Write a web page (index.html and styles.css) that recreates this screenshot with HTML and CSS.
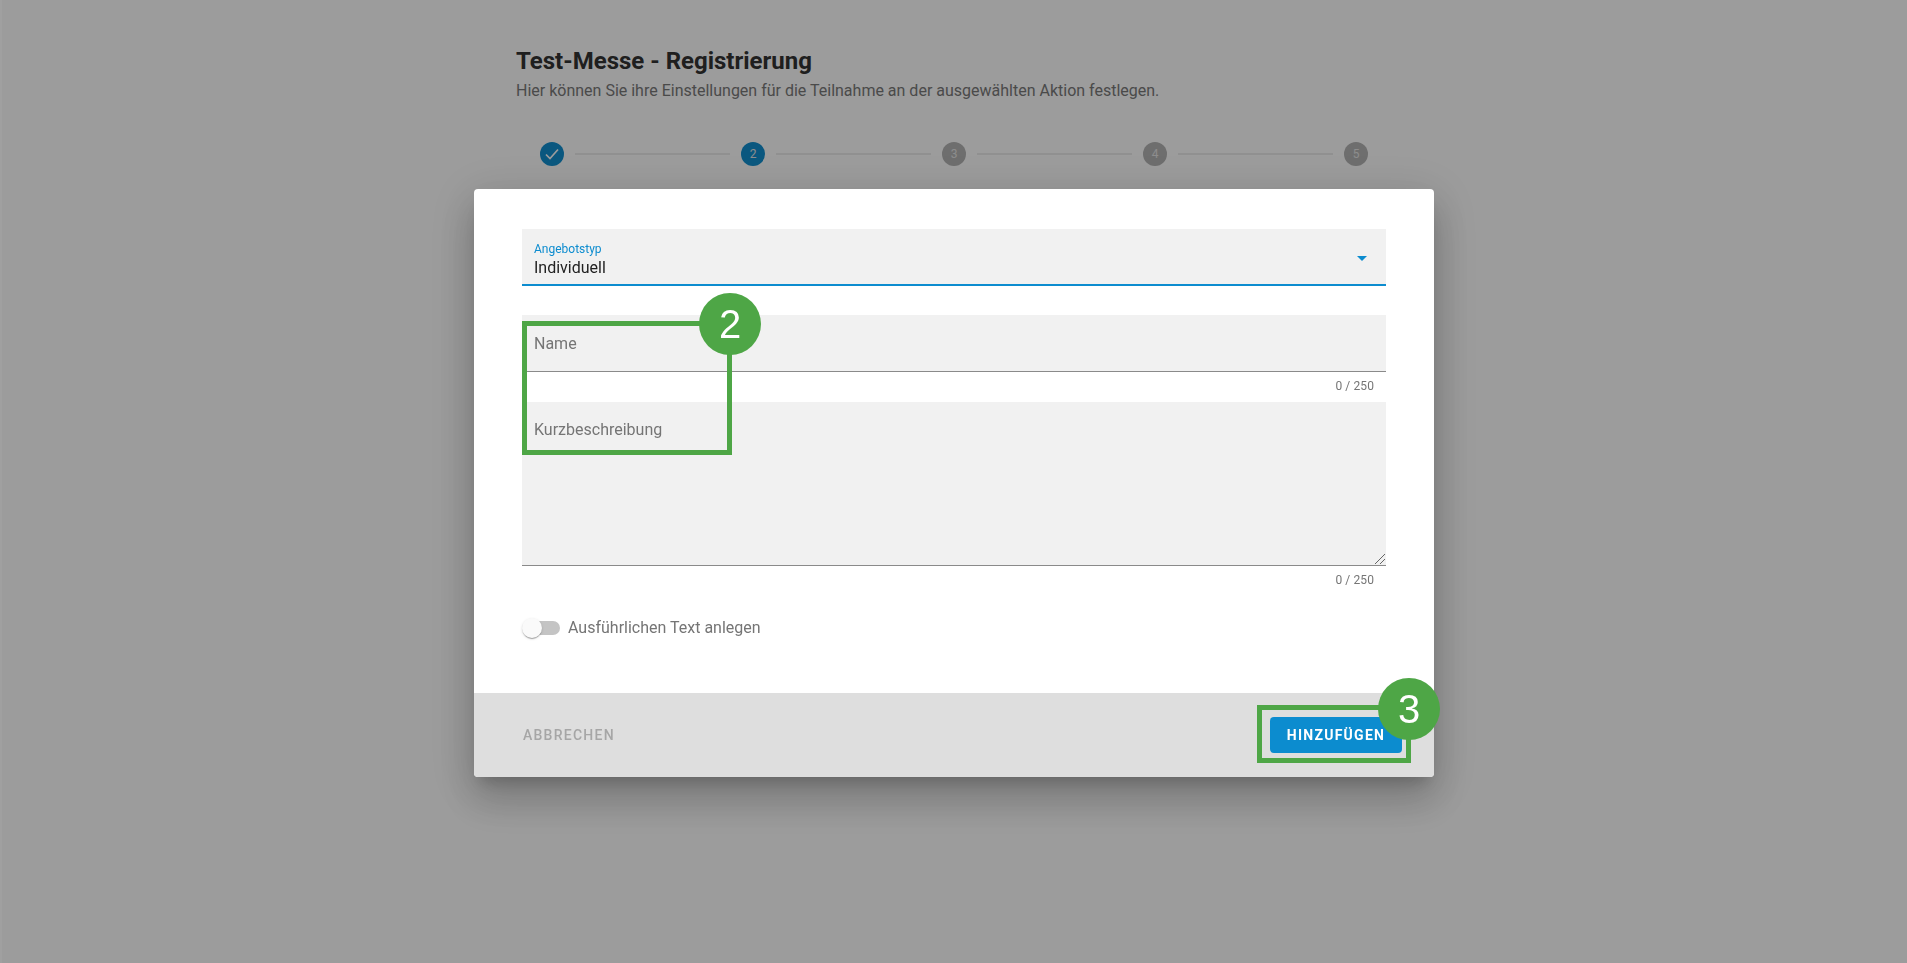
FILE: index.html

```html
<!DOCTYPE html>
<html lang="de">
<head>
  <meta charset="UTF-8">
  <title>Test-Messe - Registrierung</title>
  <link rel="stylesheet" href="styles.css">
</head>
<body>
  <div class="page">
    <h1 class="page-title">Test-Messe - Registrierung</h1>
    <p class="page-sub">Hier können Sie ihre Einstellungen für die Teilnahme an der ausgewählten Aktion festlegen.</p>
    <div class="stepper">
      <span class="step done">
        <svg width="18" height="18" viewBox="0 0 18 18"><path d="M3 9.5l4 4 8-9" fill="none" stroke="#fff" stroke-width="1.7"/></svg>
      </span>
      <span class="step-line"></span>
      <span class="step active">2</span>
      <span class="step-line"></span>
      <span class="step">3</span>
      <span class="step-line"></span>
      <span class="step">4</span>
      <span class="step-line"></span>
      <span class="step">5</span>
    </div>
  </div>

  <div class="overlay">
    <div class="dialog">
      <div class="dialog-body">
        <div class="field field-select">
          <div class="field-text">
            <span class="float-label">Angebotstyp</span>
            <span class="field-value">Individuell</span>
          </div>
          <span class="select-arrow"></span>
        </div>

        <div class="field field-name">
          <span class="placeholder">Name</span>
        </div>
        <div class="counter">0 / 250</div>

        <div class="field field-area">
          <span class="placeholder">Kurzbeschreibung</span>
          <svg class="resizer" width="12" height="12" viewBox="0 0 12 12"><path d="M1 11L11 1M6 11l5-5" stroke="#666" stroke-width="1" fill="none"/></svg>
        </div>
        <div class="counter">0 / 250</div>

        <div class="toggle-row">
          <span class="toggle"><span class="toggle-thumb"></span></span>
          <span class="toggle-label">Ausführlichen Text anlegen</span>
        </div>
      </div>

      <div class="dialog-footer">
        <span class="btn-cancel">ABBRECHEN</span>
        <span class="btn-add">HINZUFÜGEN</span>
      </div>

      <div class="mark mark-fields"></div>
      <div class="badge badge-fields">2</div>
      <div class="mark mark-add"></div>
      <div class="badge badge-add">3</div>
    </div>
  </div>
</body>
</html>
```

FILE: styles.css

```css
html, body {
  margin: 0;
  padding: 0;
  height: 100%;
  overflow: hidden;
  background-color: white;
  font-family: Roboto, "Liberation Sans", sans-serif;
}

/* page behind the dialog */
.page {
  width: 876px;
  margin-left: 516px;
  padding-top: 45px;
  box-sizing: border-box;
}
.page-title {
  margin: 0;
  font-size: 24px;
  line-height: 32px;
  font-weight: 700;
  color: #333;
}
.page-sub {
  margin: 2px 0 0 0;
  font-size: 16px;
  line-height: 24px;
  color: #7a7a7a;
}
.stepper {
  display: flex;
  align-items: center;
  margin-top: 39px;
  padding: 0 24px;
}
.step {
  width: 24px;
  height: 24px;
  flex: none;
  border-radius: 50%;
  background-color: #b4b4b4;
  color: #e6e6e6;
  font-size: 12px;
  display: flex;
  align-items: center;
  justify-content: center;
}
.step.done, .step.active {
  background-color: #118fd0;
}
.step-line {
  flex: 1;
  height: 2px;
  margin: 0 11px;
  background-color: #ececec;
}

.overlay {
  position: fixed;
  top: 0;
  left: 0;
  right: 0;
  bottom: 0;
  background-color: rgba(0, 0, 0, 0.39);
  box-shadow: inset 2px 0 0 rgba(255, 255, 255, 0.04);
  display: flex;
  justify-content: center;
  padding-top: 189px;
  box-sizing: border-box;
}

.dialog {
  position: relative;
  width: 960px;
  height: 588px;
  margin-left: 1px;
  background-color: white;
  border-radius: 4px;
  display: flex;
  flex-direction: column;
  box-shadow: 0 11px 15px -7px rgba(0, 0, 0, .2), 0 24px 38px 3px rgba(0, 0, 0, .14), 0 9px 46px 8px rgba(0, 0, 0, .12);
}
.dialog-body {
  flex: 1;
  padding: 40px 48px 0 48px;
}

.field {
  background-color: #f1f1f1;
  box-sizing: border-box;
  padding: 0 12px;
  border-bottom: 1px solid #8a8a8a;
}
.field-select {
  height: 57px;
  border-bottom: 2px solid #0c8ccf;
  display: flex;
  align-items: center;
  justify-content: space-between;
}
.field-text {
  display: flex;
  flex-direction: column;
  padding-top: 8px;
}
.float-label {
  font-size: 12px;
  line-height: 15px;
  color: #0c8ccf;
}
.field-value {
  font-size: 16px;
  line-height: 22px;
  color: #222;
}
.select-arrow {
  width: 0;
  height: 0;
  margin: 4px 7px 0 0;
  border-left: 5px solid transparent;
  border-right: 5px solid transparent;
  border-top: 5px solid #0c8ccf;
}
.field-name {
  height: 57px;
  margin-top: 29px;
  padding-top: 19px;
}
.field-area {
  height: 164px;
  display: flex;
  flex-direction: column;
  padding-top: 18px;
  padding-right: 0;
}
.placeholder {
  font-size: 16px;
  line-height: 20px;
  color: #757575;
}
.resizer {
  margin-top: auto;
  align-self: flex-end;
}
.counter {
  height: 30px;
  box-sizing: border-box;
  padding: 7px 12px 0 0;
  text-align: right;
  font-size: 12px;
  line-height: 15px;
  letter-spacing: 0.1px;
  color: #757575;
}

.toggle-row {
  display: flex;
  align-items: center;
  margin-top: 20px;
}
.toggle {
  position: relative;
  display: block;
  width: 36px;
  height: 14px;
  margin-right: 8px;
  margin-left: 2px;
  border-radius: 7px;
  background-color: #c4c4c4;
}
.toggle-thumb {
  position: absolute;
  top: -3px;
  left: -2px;
  width: 20px;
  height: 20px;
  border-radius: 50%;
  background-color: #fafafa;
  box-shadow: 0 2px 1px -1px rgba(0, 0, 0, .2), 0 1px 1px 0 rgba(0, 0, 0, .14), 0 1px 3px 0 rgba(0, 0, 0, .12);
}
.toggle-label {
  font-size: 16px;
  line-height: 24px;
  color: #757575;
}

.dialog-footer {
  height: 84px;
  background-color: #dedede;
  border-radius: 0 0 4px 4px;
  padding: 0 32px 0 49px;
  display: flex;
  align-items: center;
  justify-content: space-between;
}
.btn-cancel {
  font-size: 14px;
  font-weight: 500;
  letter-spacing: 1.25px;
  color: #a6a6a6;
}
.btn-add {
  width: 132px;
  height: 36px;
  line-height: 36px;
  text-align: center;
  border-radius: 4px;
  background-color: #0c8ccf;
  color: white;
  font-size: 14px;
  font-weight: 700;
  letter-spacing: 1.25px;
}

/* green callouts on top of the screenshot */
.mark {
  position: absolute;
  box-sizing: border-box;
  border: 5px solid #4ea646;
}
.mark-fields {
  left: 48px;
  top: 132px;
  width: 210px;
  height: 134px;
}
.mark-add {
  left: 783px;
  top: 516px;
  width: 154px;
  height: 58px;
}
.badge {
  position: absolute;
  width: 62px;
  height: 62px;
  border-radius: 50%;
  background-color: #4ea646;
  color: white;
  font-family: "Liberation Sans", sans-serif;
  font-size: 40px;
  line-height: 62px;
  text-align: center;
}
.badge-fields {
  left: 225px;
  top: 104px;
}
.badge-add {
  left: 904px;
  top: 489px;
}
```
